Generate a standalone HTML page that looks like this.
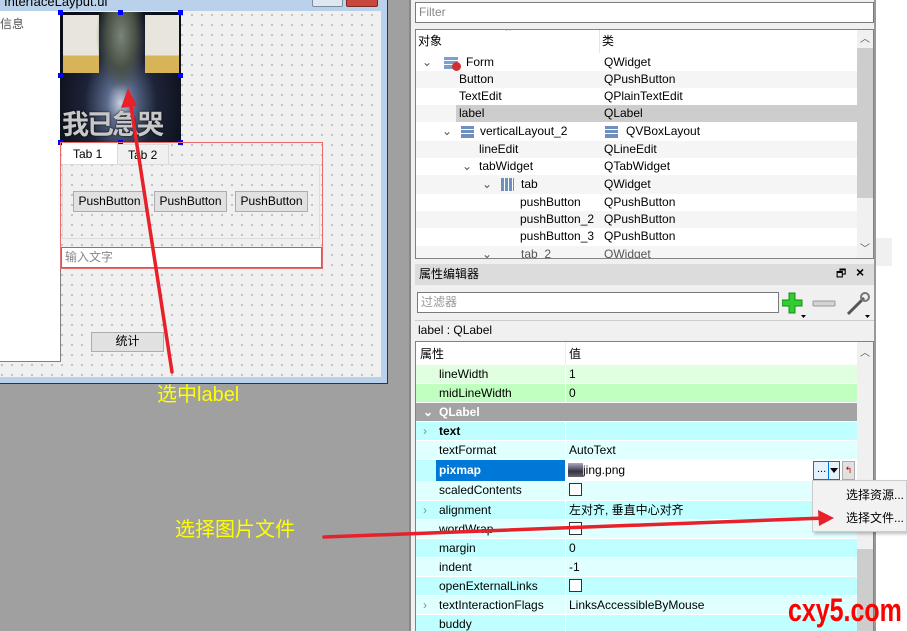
<!DOCTYPE html>
<html><head><meta charset="utf-8"><style>
*{box-sizing:border-box;margin:0;padding:0}
body{width:907px;height:631px;overflow:hidden;position:relative;background:#a0a0a0;font-family:"Liberation Sans","Noto Sans CJK SC",sans-serif;font-size:12px;color:#000}
.a{position:absolute}
.dots{background-color:#f0f0f0;background-image:radial-gradient(circle,#9a9a9a 0.7px,transparent 0.9px);background-size:10px 10px;background-position:-3px -1px}
.btn{position:absolute;background:#e1e1e1;border:1px solid #adadad;font-size:12px;text-align:center;line-height:17px}
.row{position:absolute;left:0;width:441px;height:17px;line-height:17px;font-size:12px;white-space:nowrap}
.pr{position:absolute;left:0;width:441px;height:19px;line-height:19px;font-size:12px;border-bottom:1px solid #fff;white-space:nowrap}
.pr .k{position:absolute;left:23px}
.pr .v{position:absolute;left:153px}
.pr .d{position:absolute;left:149px;top:0;bottom:0;border-left:1px solid #fff}
.chk{display:inline-block;width:13px;height:13px;border:1px solid #333;background:#fff;vertical-align:middle;margin-top:-2px}
</style></head><body>

<div class="a" style="left:0;top:0;width:388px;height:384px;background:#b9d1ea;border-right:1px solid #333;border-bottom:1px solid #333"></div>
<div class="a" style="left:4px;top:-6px;font-size:13px;color:#000">InterfaceLayput.ui</div>
<div class="a" style="left:312px;top:-4px;width:31px;height:11px;background:#dfe7f0;border:1px solid #7a8ba0;border-radius:2px"></div>
<div class="a" style="left:346px;top:-4px;width:32px;height:11px;background:#c9463d;border:1px solid #7a2a25;border-radius:2px"></div>
<div class="a dots" style="left:0;top:11px;width:381px;height:366px"></div>
<div class="a" style="left:0;top:11px;width:61px;height:351px;background:#fff;border-right:1px solid #808080;border-bottom:1px solid #808080"></div>
<div class="a" style="left:0;top:15px;font-size:12px;color:#555">信息</div>

<div class="a" style="left:60px;top:12px;width:121px;height:130px;background:radial-gradient(ellipse at 50% 70%,#c8d0e0 0%,#5a6a8a 16%,#1d2438 42%,#0c0f18 80%);overflow:hidden">
 <div class="a" style="left:3px;top:3px;width:36px;height:58px;background:linear-gradient(#e8e6dc 70%,#d8b458 70%)"></div>
 <div class="a" style="left:85px;top:3px;width:34px;height:58px;background:linear-gradient(#e8e6dc 70%,#d8b458 70%)"></div>
 <div class="a" style="left:36px;top:0;width:50px;height:80px;background:radial-gradient(ellipse at 50% 30%,#7a8478 0%,#4a5248 40%,rgba(20,24,30,0) 70%)"></div>
 <div class="a" style="left:2px;top:97px;font-size:27px;line-height:32px;color:#c8c8c8;font-weight:bold;letter-spacing:-2px;text-shadow:0 0 2px #000">我已急哭</div>
</div>
<div class="a" style="left:58px;top:10px;width:5px;height:5px;background:#00f"></div>
<div class="a" style="left:118px;top:10px;width:5px;height:5px;background:#00f"></div>
<div class="a" style="left:178px;top:10px;width:5px;height:5px;background:#00f"></div>
<div class="a" style="left:58px;top:73px;width:5px;height:5px;background:#00f"></div>
<div class="a" style="left:178px;top:73px;width:5px;height:5px;background:#00f"></div>
<div class="a" style="left:58px;top:140px;width:5px;height:5px;background:#00f"></div>
<div class="a" style="left:118px;top:140px;width:5px;height:5px;background:#00f"></div>
<div class="a" style="left:178px;top:140px;width:5px;height:5px;background:#00f"></div>

<div class="a" style="left:60px;top:142px;width:263px;height:127px;border:1px solid #e86a6a"></div>
<div class="a" style="left:62px;top:143px;width:56px;height:22px;background:#fff;font-size:12px;line-height:22px;padding-left:11px">Tab 1</div>
<div class="a" style="left:117px;top:144px;width:52px;height:21px;background:#f0f0f0;border:1px solid #d9d9d9;border-bottom:none;font-size:12px;line-height:20px;padding-left:10px">Tab 2</div>
<div class="a" style="left:62px;top:164px;width:258px;height:75px;border:1px solid #dcdcdc"></div>
<div class="btn" style="left:73px;top:191px;width:73px;height:21px;line-height:19px">PushButton</div>
<div class="btn" style="left:154px;top:191px;width:73px;height:21px;line-height:19px">PushButton</div>
<div class="btn" style="left:235px;top:191px;width:73px;height:21px;line-height:19px">PushButton</div>
<div class="a" style="left:61px;top:247px;width:261px;height:21px;background:#fff;border:1px solid #7a7a7a;font-size:12px;line-height:19px;padding-left:3px;color:#888">输入文字</div>
<div class="btn" style="left:91px;top:332px;width:73px;height:20px">统计</div>

<div class="a" style="left:157px;top:381px;font-size:20px;color:#ffff00;line-height:28px">选中label</div>
<div class="a" style="left:175px;top:516px;font-size:20px;color:#ffff00;line-height:28px">选择图片文件</div>

<div class="a" style="left:409px;top:0;width:2px;height:631px;background:#888"></div>
<div class="a" style="left:411px;top:0;width:465px;height:631px;background:#f0f0f0;border-right:2px solid #999"></div>
<div class="a" style="left:876px;top:0;width:31px;height:631px;background:#fff"></div>
<div class="a" style="left:876px;top:238px;width:16px;height:28px;background:#f0f0f0"></div>

<div class="a" style="left:415px;top:2px;width:459px;height:21px;background:#fff;border:1px solid #7a7a7a;line-height:19px;padding-left:3px;color:#888">Filter</div>

<div class="a" style="left:415px;top:29px;width:459px;height:230px;background:#fff;border:1px solid #828282;overflow:hidden">
 <div class="a" style="left:2px;top:2px;font-size:12px">对象</div>
 <div class="a" style="left:90px;top:-4px;font-size:10px;color:#666">^</div>
 <div class="a" style="left:186px;top:2px;font-size:12px">类</div>
 <div class="a" style="left:183px;top:0;width:1px;height:23px;background:#e5e5e5"></div>
 <div class="a" style="left:0;top:23px;width:441px;height:205px">
  <div class="row" style="top:1px"><span class="a" style="left:6px;color:#555">⌄</span><span class="a" style="left:28px;top:3px;width:14px;height:12px;background:linear-gradient(#7aa0d0 0,#7aa0d0 3px,#fff 3px,#fff 4px,#7aa0d0 4px,#7aa0d0 7px,#fff 7px,#fff 8px,#7aa0d0 8px)"></span><span class="a" style="left:36px;top:8px;width:9px;height:9px;border-radius:50%;background:#d03030"></span><span class="a" style="left:50px">Form</span><span class="a" style="left:188px">QWidget</span></div>
  <div class="row" style="top:18px;background:#f5f5f5"><span class="a" style="left:43px">Button</span><span class="a" style="left:188px">QPushButton</span></div>
  <div class="row" style="top:35px"><span class="a" style="left:43px">TextEdit</span><span class="a" style="left:188px">QPlainTextEdit</span></div>
  <div class="row" style="top:52px;background:#f5f5f5"><span class="a" style="left:40px;width:401px;height:17px;background:#cdcdcd"></span><span class="a" style="left:43px">label</span><span class="a" style="left:188px">QLabel</span></div>
  <div class="row" style="top:70px;height:18px"><span class="a" style="left:26px;color:#555">⌄</span><span class="a" style="left:45px;top:3px;width:13px;height:12px;background:linear-gradient(#6f8fbf 0,#6f8fbf 3px,#fff 3px,#fff 4px,#6f8fbf 4px,#6f8fbf 7px,#fff 7px,#fff 8px,#6f8fbf 8px)"></span><span class="a" style="left:64px">verticalLayout_2</span><span class="a" style="left:189px;top:3px;width:13px;height:12px;background:linear-gradient(#6f8fbf 0,#6f8fbf 3px,#fff 3px,#fff 4px,#6f8fbf 4px,#6f8fbf 7px,#fff 7px,#fff 8px,#6f8fbf 8px)"></span><span class="a" style="left:210px">QVBoxLayout</span></div>
  <div class="row" style="top:88px;background:#f5f5f5"><span class="a" style="left:63px">lineEdit</span><span class="a" style="left:188px">QLineEdit</span></div>
  <div class="row" style="top:105px"><span class="a" style="left:46px;color:#555">⌄</span><span class="a" style="left:63px">tabWidget</span><span class="a" style="left:188px">QTabWidget</span></div>
  <div class="row" style="top:122px;height:19px;line-height:19px;background:#f5f5f5"><span class="a" style="left:66px;color:#555">⌄</span><span class="a" style="left:85px;top:3px;width:13px;height:13px;background:repeating-linear-gradient(90deg,#6f8fbf 0,#6f8fbf 3px,#fff 3px,#fff 4px)"></span><span class="a" style="left:105px">tab</span><span class="a" style="left:188px">QWidget</span></div>
  <div class="row" style="top:141px"><span class="a" style="left:104px">pushButton</span><span class="a" style="left:188px">QPushButton</span></div>
  <div class="row" style="top:158px;background:#f5f5f5"><span class="a" style="left:104px">pushButton_2</span><span class="a" style="left:188px">QPushButton</span></div>
  <div class="row" style="top:175px"><span class="a" style="left:104px">pushButton_3</span><span class="a" style="left:188px">QPushButton</span></div>
  <div class="row" style="top:193px;background:#f5f5f5;color:#555"><span class="a" style="left:66px">⌄</span><span class="a" style="left:105px">tab_2</span><span class="a" style="left:188px">QWidget</span></div>
 </div>
 <div class="a" style="left:441px;top:0;width:17px;height:228px;background:#f0f0f0"></div>
 <div class="a" style="left:441px;top:18px;width:17px;height:150px;background:#cdcdcd"></div>
 <div class="a" style="left:444px;top:0;font-size:10px;color:#555">︿</div>
 <div class="a" style="left:444px;top:210px;font-size:10px;color:#555">﹀</div>
</div>

<div class="a" style="left:415px;top:264px;width:459px;height:21px;background:#dcdcdc;line-height:21px;padding-left:4px;font-size:12px">属性编辑器</div>
<div class="a" style="left:836px;top:265px;font-size:11px">🗗</div>
<div class="a" style="left:856px;top:264px;font-size:14px;font-weight:bold">×</div>
<div class="a" style="left:417px;top:292px;width:362px;height:21px;background:#fff;border:1px solid #7a7a7a;line-height:19px;padding-left:3px;color:#999">过滤器</div>
<svg class="a" style="left:782px;top:291px" width="92" height="28">
 <path d="M7 2h6v7h7v6h-7v7H7v-7H0V9h7z" fill="#2fcf2f" stroke="#1a8a1a"/>
 <path d="M19 24h5l-2.5 3z" fill="#000"/>
 <rect x="31" y="10" width="22" height="5" rx="1" fill="#d4d4d4" stroke="#999"/>
 <path d="M66 23 L82 7" stroke="#555" stroke-width="3"/>
 <circle cx="83" cy="6" r="4" fill="none" stroke="#777" stroke-width="2"/>
 <path d="M83 24h5l-2.5 3z" fill="#000"/>
</svg>
<div class="a" style="left:415px;top:320px;width:459px;height:19px;background:#f0f0f0;border-top:1px solid #ccc;line-height:19px;padding-left:3px">label : QLabel</div>

<div class="a" style="left:415px;top:341px;width:459px;height:290px;background:#fff;border:1px solid #828282;border-bottom:none;overflow:hidden">
 <div class="a" style="left:4px;top:3px">属性</div>
 <div class="a" style="left:153px;top:3px">值</div>
 <div class="a" style="left:149px;top:0;width:1px;height:23px;background:#eee"></div>
 <div class="pr" style="top:23px;background:#e0ffe0"><span class="k">lineWidth</span><span class="d"></span><span class="v">1</span></div>
 <div class="pr" style="top:42px;background:#c0ffc0"><span class="k">midLineWidth</span><span class="d"></span><span class="v">0</span></div>
 <div class="pr" style="top:61px;background:#a3a3a3;color:#fff;font-weight:bold"><span class="a" style="left:7px">⌄</span><span class="k">QLabel</span></div>
 <div class="pr" style="top:80px;background:#c0ffff;font-weight:bold"><span class="a" style="left:7px;color:#888;font-weight:normal">›</span><span class="k">text</span><span class="d"></span></div>
 <div class="pr" style="top:99px;background:#e0ffff"><span class="k">textFormat</span><span class="d"></span><span class="v">AutoText</span></div>
 <div class="pr" style="top:118px;height:21px;line-height:21px;background:#fff"><span class="a" style="left:0;width:20px;height:21px;background:#c0ffff"></span><span class="a" style="left:20px;width:129px;height:21px;background:#0078d7;color:#fff;font-weight:bold;padding-left:3px">pixmap</span><span class="a" style="left:152px;top:3px;width:15px;height:14px;background:linear-gradient(#aab 0,#334 60%,#667)"></span><span class="a" style="left:167px">jing.png</span>
  <span class="a" style="left:397px;top:1px;width:27px;height:19px;border:1px solid #0078d7;background:#e5f1fb;line-height:14px;font-size:11px;padding-left:3px">...</span><span class="a" style="left:412px;top:2px;width:1px;height:17px;background:#0078d7"></span><span class="a" style="left:414px;top:8px;width:0;height:0;border-left:4px solid transparent;border-right:4px solid transparent;border-top:5px solid #000"></span>
  <span class="a" style="left:426px;top:1px;width:13px;height:19px;background:#e1e1e1;border:1px solid #adadad;color:#b00;font-size:9px;line-height:16px;text-align:center">↰</span></div>
 <div class="pr" style="top:139px;height:20px;background:#e0ffff"><span class="k">scaledContents</span><span class="d"></span><span class="v"><span class="chk"></span></span></div>
 <div class="pr" style="top:159px;background:#c0ffff"><span class="a" style="left:7px;color:#888">›</span><span class="k">alignment</span><span class="d"></span><span class="v">左对齐, 垂直中心对齐</span></div>
 <div class="pr" style="top:178px;background:#e0ffff"><span class="k">wordWrap</span><span class="d"></span><span class="v"><span class="chk"></span></span></div>
 <div class="pr" style="top:197px;background:#c0ffff"><span class="k">margin</span><span class="d"></span><span class="v">0</span></div>
 <div class="pr" style="top:216px;background:#e0ffff"><span class="k">indent</span><span class="d"></span><span class="v">-1</span></div>
 <div class="pr" style="top:235px;background:#c0ffff"><span class="k">openExternalLinks</span><span class="d"></span><span class="v"><span class="chk"></span></span></div>
 <div class="pr" style="top:254px;background:#e0ffff"><span class="a" style="left:7px;color:#888">›</span><span class="k">textInteractionFlags</span><span class="d"></span><span class="v">LinksAccessibleByMouse</span></div>
 <div class="pr" style="top:273px;background:#c0ffff"><span class="k">buddy</span><span class="d"></span></div>
 <div class="a" style="left:441px;top:0;width:17px;height:290px;background:#f0f0f0"></div>
 <div class="a" style="left:441px;top:207px;width:17px;height:83px;background:#cdcdcd"></div>
 <div class="a" style="left:444px;top:2px;font-size:10px;color:#555">︿</div>
</div>

<div class="a" style="left:812px;top:480px;width:95px;height:52px;background:#f2f2f2;border:1px solid #ccc;box-shadow:2px 2px 3px rgba(0,0,0,.25)">
 <div class="a" style="left:33px;top:5px;font-size:12px">选择资源...</div>
 <div class="a" style="left:33px;top:28px;font-size:12px">选择文件...</div>
</div>

<div class="a" style="left:788px;top:590px;font-family:'Liberation Sans',sans-serif;font-weight:bold;font-size:32px;color:#f00;transform:scaleX(0.78);transform-origin:left;line-height:40px;white-space:nowrap">cxy5.com</div>

<svg class="a" style="left:0;top:0" width="907" height="631">
 <path d="M172 372 L130 100" stroke="#e8202a" stroke-width="3.5" stroke-linecap="round" fill="none"/>
 <path d="M128 88 L121 108 L137 106 Z" fill="#e8202a"/>
 <path d="M324 537 L825 518" stroke="#e8202a" stroke-width="3.5" stroke-linecap="round" fill="none"/>
 <path d="M834 518 L818 510 L819 526 Z" fill="#e8202a"/>
</svg>
</body></html>
